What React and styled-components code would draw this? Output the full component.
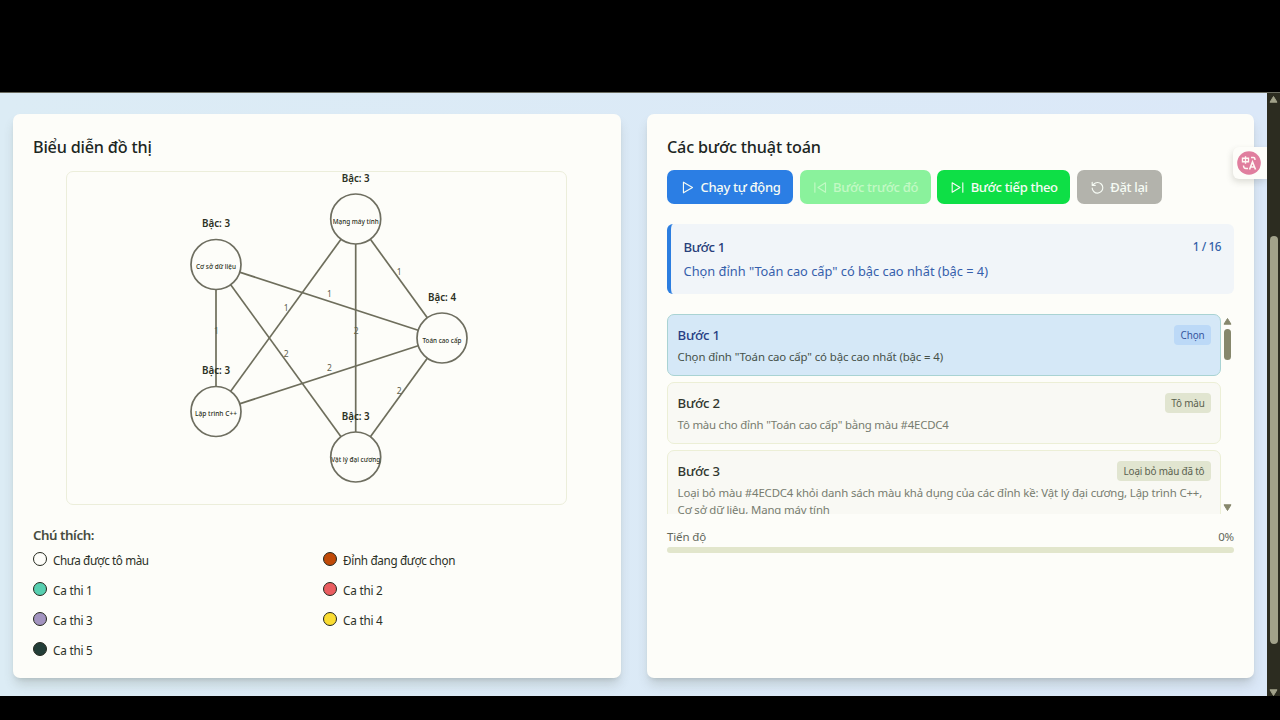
import React from "react";
import styled, { createGlobalStyle } from "styled-components";

const Global = createGlobalStyle`
  * { box-sizing: border-box; }
  body { margin: 0; background: #000; font-family: "Noto Sans", "Open Sans", sans-serif; }
`;
const Screen = styled.div`
  width: 1280px; height: 720px; background: #000; padding: 92px 0 24px; overflow: hidden;
`;
const Viewport = styled.div`
  position: relative; height: 604px; display: flex; border-top: 1px solid #6b6c60;
`;
const Page = styled.main`
  flex: 1; display: grid; grid-template-columns: 608px 607px; gap: 26px;
  padding: 21px 13px 18px; background: linear-gradient(90deg, #dcecf5, #dbe8f8);
`;
const Card = styled.section`
  background: #fdfdf9; border-radius: 7px; padding: 20px; height: 564px;
  box-shadow: 0 8px 12px -2px rgba(70, 75, 60, 0.2), 0 3px 5px -3px rgba(70, 75, 60, 0.2);
`;
const Title = styled.h2`
  margin: 0 0 ${(p) => p.$gap}px; height: 24px; line-height: 26px; font-size: 16.2px; font-weight: 500;
  color: #20261f; letter-spacing: -0.18px; white-space: nowrap;
`;
const GraphBox = styled.div`
  width: 501px; height: 334px; margin: 0 auto 0 33px; border: 1px solid #eceedb; border-radius: 7px;
  svg { display: block; overflow: visible; }
`;
const LegendTitle = styled.h3`
  margin: 20px 0 7px; font-size: 13.3px; line-height: 20px; font-weight: 600; color: #464c40; letter-spacing: -0.45px;
`;
const Legend = styled.div`
  display: grid; grid-template-columns: 290px 1fr; row-gap: 13px;
`;
const LegendItem = styled.div`
  display: flex; align-items: center; gap: 6px; height: 17px; font-size: 11.7px; color: #2b3026;
  letter-spacing: ${(p) => p.$ls}px; line-height: 17px; white-space: nowrap;
`;
const Dot = styled.span`
  width: 14px; height: 14px; margin-bottom: 3px; border-radius: 50%; border: 1.5px solid #24281e; background: ${(p) => p.$c};
`;
const Buttons = styled.div`
  display: flex; gap: 6.6px; margin-bottom: 20px;
`;
const Button = styled.button`
  width: ${(p) => p.$w}px; height: 34px; border: 0; border-radius: 7px; padding: 0 0 0 13px; display: flex; align-items: center;
  gap: 5.5px; background: ${(p) => p.$bg}; color: ${(p) => p.$fg || "#f6fbf4"}; font: 500 13px "Noto Sans", sans-serif;
  letter-spacing: -0.32px; white-space: nowrap;
  svg { flex: none; }
`;
const Current = styled.div`
  height: 70px; background: #f1f5f9; border-left: 4px solid #2c7ee0; border-radius: 6px; padding: 13px 13px 0 12.6px; margin-bottom: 20px;
`;
const Row = styled.div`
  display: flex; justify-content: space-between; align-items: center;
`;
const CurrentName = styled.div`
  font-size: 13.2px; line-height: 21px; font-weight: 500; color: #28407a; letter-spacing: -0.4px;
`;
const CurrentCount = styled.div`
  font-size: 11.7px; line-height: 19px; font-weight: 500; color: #315fa8; letter-spacing: -0.4px; margin-top: -2px;
`;
const CurrentText = styled.div`
  margin-top: 3px; font-size: 12.8px; line-height: 20px; color: #365fac; white-space: nowrap;
`;
const Scroller = styled.div`
  height: 200px; overflow: hidden; display: flex; margin-bottom: 13px;
`;
const StepList = styled.div`
  width: 554px; display: flex; flex-direction: column; gap: 6px;
`;
const Step = styled.article`
  flex: none; height: ${(p) => (p.$tall ? 79 : 62)}px; border-radius: 7px; padding: 10px 9px 0 9.6px;
  border: 1px solid ${(p) => (p.$active ? "#a9d3d3" : "#ecefd6")}; background: ${(p) => (p.$active ? "#d5e8f7" : "#f9f9f4")};
`;
const StepName = styled.div`
  font-size: 13.2px; line-height: 20px; font-weight: 500; letter-spacing: -0.25px; color: ${(p) => (p.$active ? "#283f84" : "#32372f")};
`;
const Tag = styled.span`
  width: ${(p) => p.$w}px; height: 20px; border-radius: 4px; text-align: center; font-size: 9.9px; line-height: 20px;
  letter-spacing: -0.16px; white-space: nowrap;
  background: ${(p) => (p.$active ? "#bcd9f7" : "#e1e5d0")}; color: ${(p) => (p.$active ? "#34549d" : "#59604e")};
`;
const StepText = styled.div`
  margin-top: 3px; font-size: 11.4px; line-height: 17px; white-space: nowrap; letter-spacing: ${(p) => p.$ls}px;
  color: ${(p) => (p.$active ? "#465149" : "#777c6f")};
`;
const InnerBar = styled.div`
  width: 13px; display: flex; flex-direction: column; align-items: center; padding: 4px 0 3px;
`;
const InnerThumb = styled.div`
  width: 7px; height: 31px; margin: 4px 0 auto; background: #86876c; border-radius: 4px;
`;
const Progress = styled(Row)`
  height: 19px; font-size: 11.5px; line-height: 19px; color: #62675b; letter-spacing: -0.15px;
`;
const Track = styled.div`
  height: 6px; margin-top: 1px; border-radius: 3px; background: #e2e6cc;
`;
const OuterBar = styled.div`
  width: 13px; background: #2c2c20; display: flex; flex-direction: column; align-items: center; padding: 3px 0 0;
`;
const OuterThumb = styled.div`
  width: 8px; height: 408px; margin: 133px 0 auto; background: #a2a28a; border-radius: 4px;
`;
const Translate = styled.div`
  position: absolute; left: 1233px; top: 54px; width: 34px; height: 32px; border-radius: 6px 0 0 6px; background: #fdfdf9;
  padding: 4px; box-shadow: -1px 3px 6px rgba(80, 80, 60, 0.18); clip-path: inset(-8px 0 -10px -10px);
  svg { display: block; }
`;

const nodes = [
  { x: 442, y: 338, label: "Toán cao cấp", deg: 4, w: 39 },
  { x: 355.7, y: 219, label: "Mạng máy tính", deg: 3, w: 46 },
  { x: 216, y: 264.5, label: "Cơ sở dữ liệu", deg: 3, w: 40 },
  { x: 216, y: 411.5, label: "Lập trình C++", deg: 3, w: 42 },
  { x: 355.7, y: 457, label: "Vật lý đại cương", deg: 3, w: 49 },
];
const edges = [[0, 1, 1], [0, 2, 1], [0, 3, 2], [0, 4, 2], [1, 3, 1], [1, 4, 2], [2, 4, 2], [2, 3, 1]];

function Graph() {
  return (
    <svg width="499" height="332" viewBox="67 172 499 332" textAnchor="middle">
      {edges.map(([a, b], i) => (
        <line key={i} x1={nodes[a].x} y1={nodes[a].y} x2={nodes[b].x} y2={nodes[b].y} stroke="#6e6e5c" strokeWidth="1.7" />
      ))}
      {edges.map(([a, b, n], i) => (
        <text key={i} x={(nodes[a].x + nodes[b].x) / 2 + 0.4} y={(nodes[a].y + nodes[b].y) / 2 - 4} fontSize="8.5" fill="#60604c">{n}</text>
      ))}
      {nodes.map((n) => (
        <g key={n.label} fill="#2b3022">
          <circle cx={n.x} cy={n.y} r="25" fill="#fdfdf9" stroke="#6e6e60" strokeWidth="1.7" />
          <text x={n.x} y={n.y + 4.6} fontSize="6.3" fontWeight="500" textLength={n.w} lengthAdjust="spacingAndGlyphs">{n.label}</text>
          <text x={n.x} y={n.y - 37.5} fontSize="9.8" fontWeight="600" textLength="28" lengthAdjust="spacingAndGlyphs">{`Bậc: ${n.deg}`}</text>
        </g>
      ))}
    </svg>
  );
}

const shapes = {
  play: <path d="M5.5 3.5v17L20 12z" />,
  prev: <path d="M20 4.5v15L8 12zM3 19.5v-15" />,
  next: <path d="M3.5 4.5v15L16 12zM20.5 4.5v15" />,
  reset: <path d="M3.5 13a8.5 8.5 0 1 0 8.5-9 9 9 0 0 0-6.2 2.6L3.5 8.5M3.5 3.5v5h5" />,
};
const Icon = ({ name }) => (
  <svg width="15" height="15" viewBox="0 0 24 24" fill="none" stroke="currentColor" strokeWidth="1.8" strokeLinecap="round" strokeLinejoin="round">
    {shapes[name]}
  </svg>
);
const Arrow = ({ down, color }) => (
  <svg width="9" height="7" viewBox="0 0 9 7"><path d={down ? "M1 .8h7L4.5 6.5z" : "M1 6.2h7L4.5.5z"} fill={color} stroke={color} strokeLinejoin="round" /></svg>
);

const legend = [
  ["Chưa được tô màu", "#fdfdf9", -0.4], ["Đỉnh đang được chọn", "#c04a08", -0.33], ["Ca thi 1", "#57cfb0", -0.2], ["Ca thi 2", "#ea5d60", -0.2],
  ["Ca thi 3", "#a394c0", -0.2], ["Ca thi 4", "#fadc32", -0.2], ["Ca thi 5", "#233e38", -0.2],
];
const steps = [
  { name: "Bước 1", tag: "Chọn", w: 37, ls: -0.11, active: true, lines: ['Chọn đỉnh "Toán cao cấp" có bậc cao nhất (bậc = 4)'] },
  { name: "Bước 2", tag: "Tô màu", w: 46, ls: -0.2, lines: ['Tô màu cho đỉnh "Toán cao cấp" bằng màu #4ECDC4'] },
  { name: "Bước 3", tag: "Loại bỏ màu đã tô", w: 94, ls: -0.15, tall: true, lines: ["Loại bỏ màu #4ECDC4 khỏi danh sách màu khả dụng của các đỉnh kề: Vật lý đại cương, Lập trình C++,", "Cơ sở dữ liệu, Mạng máy tính"] },
];

export default function App() {
  return (
    <Screen>
      <Global />
      <Viewport>
        <Page>
          <Card>
            <Title $gap={13}>Biểu diễn đồ thị</Title>
            <GraphBox><Graph /></GraphBox>
            <LegendTitle>Chú thích:</LegendTitle>
            <Legend>
              {legend.map(([t, c, ls]) => <LegendItem key={t} $ls={ls}><Dot $c={c} />{t}</LegendItem>)}
            </Legend>
          </Card>
          <Card>
            <Title $gap={12}>Các bước thuật toán</Title>
            <Buttons>
              <Button $w={126} $bg="#2b7ee4"><Icon name="play" />Chạy tự động</Button>
              <Button $w={131} $bg="#8af29c" $fg="#c2f9c4"><Icon name="prev" />Bước trước đó</Button>
              <Button $w={133} $bg="#0edf46"><Icon name="next" />Bước tiếp theo</Button>
              <Button $w={85} $bg="#b3b3ac"><Icon name="reset" />Đặt lại</Button>
            </Buttons>
            <Current>
              <Row><CurrentName>Bước 1</CurrentName><CurrentCount>1 / 16</CurrentCount></Row>
              <CurrentText>Chọn đỉnh "Toán cao cấp" có bậc cao nhất (bậc = 4)</CurrentText>
            </Current>
            <Scroller>
              <StepList>
                {steps.map((s) => (
                  <Step key={s.name} $active={s.active} $tall={s.tall}>
                    <Row><StepName $active={s.active}>{s.name}</StepName><Tag $w={s.w} $active={s.active}>{s.tag}</Tag></Row>
                    <StepText $active={s.active} $ls={s.ls}>{s.lines.map((l) => <div key={l}>{l}</div>)}</StepText>
                  </Step>
                ))}
              </StepList>
              <InnerBar><Arrow color="#86876c" /><InnerThumb /><Arrow down color="#86876c" /></InnerBar>
            </Scroller>
            <Progress><span>Tiến độ</span><span>0%</span></Progress>
            <Track />
          </Card>
        </Page>
        <OuterBar><Arrow color="#a2a28a" /><OuterThumb /><Arrow down color="#a2a28a" /></OuterBar>
        <Translate>
          <svg width="24" height="24" viewBox="0 0 24 24" fill="none" stroke="#fff8f4" strokeWidth="1.4">
            <circle cx="12" cy="12" r="11.8" fill="#e07e9e" stroke="none" />
            <path d="M5.5 7.2h6v3.6h-6zM8.5 5.2v7.6M14 6.5h2.5q1.5 0 1.5 2.5M6.5 14.5q0 3 2.5 3h2" />
            <path d="m12.5 18.5 3-7.5 3 7.5M13.5 16h4" strokeWidth="1.6" />
          </svg>
        </Translate>
      </Viewport>
    </Screen>
  );
}
